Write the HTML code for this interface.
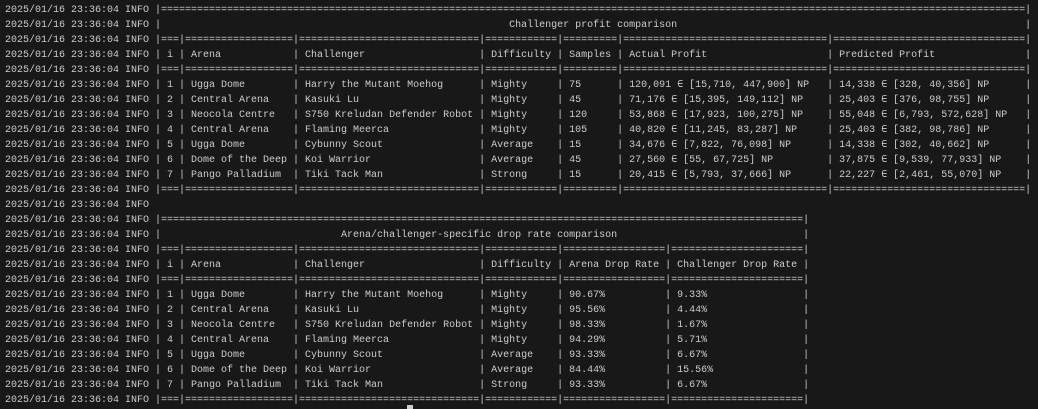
<!DOCTYPE html>
<html><head><meta charset="utf-8"><style>
html,body{margin:0;padding:0;background:#181818;width:1038px;height:409px;overflow:hidden}
pre{margin:0;position:absolute;left:5px;top:3px;font-family:"Liberation Mono","DejaVu Sans Mono",monospace;font-size:10px;line-height:15px;color:#cccccc;white-space:pre}
.cur{position:absolute;left:407px;top:405px;width:6px;height:4px;background:#cccccc}
</style></head><body>
<pre>2025/01/16 23:36:04 INFO |================================================================================================================================================|
2025/01/16 23:36:04 INFO |                                                          Challenger profit comparison                                                          |
2025/01/16 23:36:04 INFO |===|==================|==============================|============|=========|==================================|================================|
2025/01/16 23:36:04 INFO | i | Arena            | Challenger                   | Difficulty | Samples | Actual Profit                    | Predicted Profit               |
2025/01/16 23:36:04 INFO |===|==================|==============================|============|=========|==================================|================================|
2025/01/16 23:36:04 INFO | 1 | Ugga Dome        | Harry the Mutant Moehog      | Mighty     | 75      | 120,091 ∈ [15,710, 447,900] NP   | 14,338 ∈ [328, 40,356] NP      |
2025/01/16 23:36:04 INFO | 2 | Central Arena    | Kasuki Lu                    | Mighty     | 45      | 71,176 ∈ [15,395, 149,112] NP    | 25,403 ∈ [376, 98,755] NP      |
2025/01/16 23:36:04 INFO | 3 | Neocola Centre   | S750 Kreludan Defender Robot | Mighty     | 120     | 53,868 ∈ [17,923, 100,275] NP    | 55,048 ∈ [6,793, 572,628] NP   |
2025/01/16 23:36:04 INFO | 4 | Central Arena    | Flaming Meerca               | Mighty     | 105     | 40,820 ∈ [11,245, 83,287] NP     | 25,403 ∈ [382, 98,786] NP      |
2025/01/16 23:36:04 INFO | 5 | Ugga Dome        | Cybunny Scout                | Average    | 15      | 34,676 ∈ [7,822, 76,098] NP      | 14,338 ∈ [302, 40,662] NP      |
2025/01/16 23:36:04 INFO | 6 | Dome of the Deep | Koi Warrior                  | Average    | 45      | 27,560 ∈ [55, 67,725] NP         | 37,875 ∈ [9,539, 77,933] NP    |
2025/01/16 23:36:04 INFO | 7 | Pango Palladium  | Tiki Tack Man                | Strong     | 15      | 20,415 ∈ [5,793, 37,666] NP      | 22,227 ∈ [2,461, 55,070] NP    |
2025/01/16 23:36:04 INFO |===|==================|==============================|============|=========|==================================|================================|
2025/01/16 23:36:04 INFO 
2025/01/16 23:36:04 INFO |===========================================================================================================|
2025/01/16 23:36:04 INFO |                              Arena/challenger-specific drop rate comparison                               |
2025/01/16 23:36:04 INFO |===|==================|==============================|============|=================|======================|
2025/01/16 23:36:04 INFO | i | Arena            | Challenger                   | Difficulty | Arena Drop Rate | Challenger Drop Rate |
2025/01/16 23:36:04 INFO |===|==================|==============================|============|=================|======================|
2025/01/16 23:36:04 INFO | 1 | Ugga Dome        | Harry the Mutant Moehog      | Mighty     | 90.67%          | 9.33%                |
2025/01/16 23:36:04 INFO | 2 | Central Arena    | Kasuki Lu                    | Mighty     | 95.56%          | 4.44%                |
2025/01/16 23:36:04 INFO | 3 | Neocola Centre   | S750 Kreludan Defender Robot | Mighty     | 98.33%          | 1.67%                |
2025/01/16 23:36:04 INFO | 4 | Central Arena    | Flaming Meerca               | Mighty     | 94.29%          | 5.71%                |
2025/01/16 23:36:04 INFO | 5 | Ugga Dome        | Cybunny Scout                | Average    | 93.33%          | 6.67%                |
2025/01/16 23:36:04 INFO | 6 | Dome of the Deep | Koi Warrior                  | Average    | 84.44%          | 15.56%               |
2025/01/16 23:36:04 INFO | 7 | Pango Palladium  | Tiki Tack Man                | Strong     | 93.33%          | 6.67%                |
2025/01/16 23:36:04 INFO |===|==================|==============================|============|=================|======================|</pre>
<div class="cur"></div>
</body></html>
